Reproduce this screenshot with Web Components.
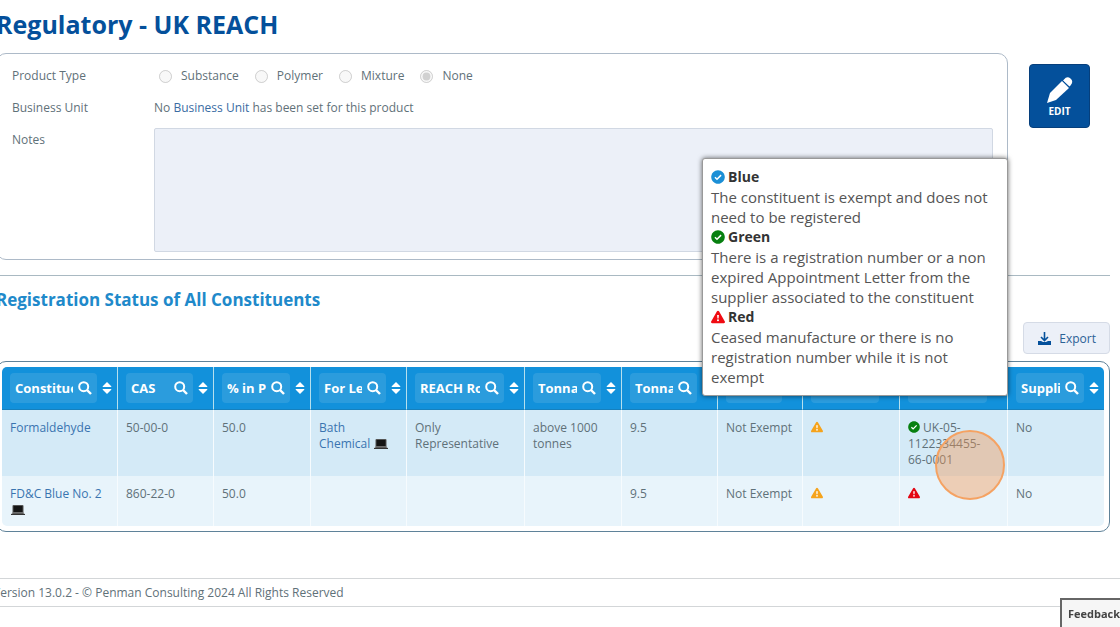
<!DOCTYPE html>
<html lang="en">
<head>
<meta charset="utf-8">
<title>Regulatory - UK REACH</title>
<style>
    body {
        margin: 0;
        overflow-x: hidden;
        background: #fff;
        color: #5f7179;
        font: 12px/16px "Open Sans", "Noto Sans", sans-serif;
    }
</style>
</head>
<body>
<reach-page>
    <product-panel></product-panel>
    <edit-button slot="action"></edit-button>
    <export-button slot="tools"></export-button>
    <constituent-table slot="table"></constituent-table>
</reach-page>
<page-footer>Version 13.0.2 - © Penman Consulting 2024 All Rights Reserved</page-footer>
<status-tooltip></status-tooltip>
<click-marker></click-marker>
<feedback-tab>Feedback</feedback-tab>

<script>
const icons = {
    check: `<svg viewBox="0 0 512 512"><path fill="currentColor" d="M504 256c0 137-111 248-248 248S8 393 8 256 119 8 256 8s248 111 248 248z"/><path fill="none" stroke="#fff" stroke-width="54" d="M145 264l74 74 150-150"/></svg>`,
    warning: `<svg viewBox="0 0 576 512"><path fill="currentColor" d="M569.500 440c18.500 32-4.700 72-41.600 72H48c-36.900 0-60-40-41.600-72L246.400 24c18.500-32 64.700-32 83.200 0z"/><path fill="#fff" d="M251 172h74l-12 148h-50zM288 348a42 42 0 1 1 0 84 42 42 0 0 1 0-84z"/></svg>`,
    laptop: `<svg viewBox="0 0 28 22"><path fill="#555" d="M5 1h18a2 2 0 0 1 2 2v14H3V3a2 2 0 0 1 2-2z"/><path fill="#151515" d="M5 3h18v12H5z"/><path fill="#858585" d="M3 16h22l3 4H0z"/><path fill="#333" d="M4 17h20l1 1H3zM0 19h28v2H0z"/></svg>`
};

class ReachPage extends HTMLElement {
    constructor() {
        super();
        this.attachShadow({ mode: 'open' });
    }

    connectedCallback() {
        this.shadowRoot.innerHTML = `
            <style>
                :host {
                    display: block;
                    margin: 0 10px 0 -4px;
                }
                h1 {
                    margin: 0;
                    padding: 4px 0 9px;
                    color: #04509b;
                    font-size: 25px;
                    line-height: 40px;
                    font-weight: 700;
                }
                h2 {
                    margin: 0;
                    color: #2089ca;
                    font-size: 17px;
                    line-height: 24px;
                    font-weight: 700;
                }
                .top {
                    display: flex;
                    align-items: flex-start;
                    gap: 21px;
                    padding: 0 20px 15px 0;
                    border-bottom: 1px solid #a9b9c2;
                }
                .top ::slotted(product-panel) {
                    flex: 1;
                }
                .list {
                    padding-top: 12px;
                }
                .tools {
                    display: flex;
                    justify-content: flex-end;
                    padding: 10px 0 7px;
                }
            </style>
            <h1>Regulatory - UK REACH</h1>
            <div class="top"><slot></slot><slot name="action"></slot></div>
            <section class="list">
                <h2>Registration Status of All Constituents</h2>
                <div class="tools"><slot name="tools"></slot></div>
                <slot name="table"></slot>
            </section>
        `;
    }
}

class ProductPanel extends HTMLElement {
    constructor() {
        super();
        this.attachShadow({ mode: 'open' });
    }

    connectedCallback() {
        const types = ['Substance', 'Polymer', 'Mixture', 'None'];
        this.shadowRoot.innerHTML = `
            <style>
                :host {
                    display: block;
                    padding: 10px 14px 7px 15px;
                    border: 1px solid #adbac8;
                    border-radius: 10px;
                    line-height: 24px;
                }
                .form {
                    display: grid;
                    grid-template-columns: 142px 1fr;
                    row-gap: 8px;
                }
                .radios {
                    display: flex;
                    gap: 16px;
                    padding-left: 5px;
                }
                .radios label {
                    display: flex;
                    align-items: center;
                    gap: 9px;
                }
                input {
                    width: 13px;
                    height: 13px;
                    margin: 0;
                }
                a {
                    color: #3a6ca3;
                    text-decoration: none;
                }
                textarea {
                    display: block;
                    box-sizing: border-box;
                    width: 100%;
                    height: 124px;
                    border: 1px solid #d1d8e3;
                    border-radius: 2px;
                    background: #ecf0f8;
                    resize: none;
                }
            </style>
            <div class="form">
                <span id="type">Product Type</span>
                <div class="radios" role="radiogroup" aria-labelledby="type">
                    ${types.map(t => `<label><input type="radio" name="type" disabled ${t === 'None' ? 'checked' : ''}>${t}</label>`).join('')}
                </div>
                <span>Business Unit</span>
                <span>No <a href="#">Business Unit</a> has been set for this product</span>
                <label for="notes">Notes</label>
                <textarea id="notes" readonly></textarea>
            </div>
        `;
    }
}

class EditButton extends HTMLElement {
    constructor() {
        super();
        this.attachShadow({ mode: 'open' });
    }

    connectedCallback() {
        this.shadowRoot.innerHTML = `
            <style>
                :host {
                    display: block;
                    margin-top: 11px;
                }
                button {
                    display: flex;
                    flex-direction: column;
                    align-items: center;
                    justify-content: center;
                    width: 61px;
                    height: 64px;
                    padding: 3px 0 0;
                    border: 1px solid #063f7c;
                    border-radius: 4px;
                    background: #04509b;
                    color: #fff;
                    font: 700 10px/16px "Open Sans", sans-serif;
                }
                svg {
                    width: 26px;
                    height: 26px;
                }
            </style>
            <button type="button">
                <svg viewBox="0 0 26 26" fill="#fff"><path d="M15 4l7 7L9 23 0 26l3-10z"/><path d="M17 2.500q3-4 6.500-1t0 7l-1 1L16 3.500z"/><path d="M15.500 3.500l7 7" stroke="#04509b" stroke-width="1"/></svg>
                EDIT
            </button>
        `;
    }
}

class ExportButton extends HTMLElement {
    constructor() {
        super();
        this.attachShadow({ mode: 'open' });
    }

    connectedCallback() {
        this.shadowRoot.innerHTML = `
            <style>
                :host {
                    display: block;
                }
                button {
                    display: flex;
                    align-items: center;
                    gap: 8px;
                    height: 32px;
                    padding: 1px 13px 0 14px;
                    border: 1px solid #d5dbe6;
                    border-radius: 4px;
                    background: #ecf0f8;
                    color: #2b6195;
                    font: 12px/16px "Open Sans", sans-serif;
                }
                svg {
                    width: 13px;
                    height: 13px;
                }
            </style>
            <button type="button">
                <svg viewBox="0 0 13 13"><path fill="#04509b" d="M0 9h3l2 1h3l2-1h3v4H0z"/><path fill="none" stroke="#04509b" stroke-width="1.600" d="M6.500 0v8M3 5l3.500 3.500L10 5"/></svg>
                Export
            </button>
        `;
    }
}

class StatusIcon extends HTMLElement {
    constructor() {
        super();
        this.attachShadow({ mode: 'open' });
    }

    connectedCallback() {
        this.shadowRoot.innerHTML = `
            <style>
                :host {
                    display: inline-block;
                    width: 12px;
                    height: 12px;
                    vertical-align: -1px;
                }
                :host([size="large"]) {
                    width: 14px;
                    height: 14px;
                    vertical-align: -2px;
                }
                :host([type="laptop"]) {
                    width: 14px;
                    margin-left: 1px;
                    vertical-align: -2px;
                }
                svg {
                    display: block;
                    width: 100%;
                    height: 100%;
                }
            </style>
            ${icons[this.getAttribute('type')]}
        `;
    }
}

class ColumnFilter extends HTMLElement {
    constructor() {
        super();
        this.attachShadow({ mode: 'open' });
    }

    connectedCallback() {
        const name = this.getAttribute('name');
        this.shadowRoot.innerHTML = `
            <style>
                :host {
                    display: flex;
                    align-items: center;
                    gap: 5px;
                }
                .box {
                    display: flex;
                    flex: 1;
                    align-items: center;
                    gap: 5px;
                    min-width: 0;
                    height: 30px;
                    box-sizing: border-box;
                    padding: 0 5px;
                    border-radius: 4px;
                    background: #2b9cdd;
                }
                input {
                    flex: 1;
                    width: 0;
                    min-width: 0;
                    padding: 0;
                    border: 0;
                    background: none;
                    font: 700 13px/20px "Open Sans", sans-serif;
                    color: #fff;
                }
                input::placeholder {
                    color: #fff;
                    opacity: 1;
                }
                .search {
                    width: 14px;
                    height: 14px;
                    flex: none;
                }
                button {
                    display: flex;
                    padding: 0;
                    border: 0;
                    background: none;
                }
                .sort {
                    width: 10px;
                    height: 12px;
                }
            </style>
            <div class="box">
                <input type="text" placeholder="${name}" aria-label="${name}">
                <svg class="search" viewBox="0 0 14 14" fill="none" stroke="#fff" stroke-width="2"><circle cx="5.700" cy="5.700" r="4.500"/><path stroke-width="2.400" d="M9 9l4 4"/></svg>
            </div>
            <button type="button" aria-label="Sort">
                <svg class="sort" viewBox="0 0 10 12" fill="#fff"><path d="M5 0l4 4q1 1 0 1H1q-1 0 0-1zM5 12l4-4q1-1 0-1H1q-1 0 0 1z"/></svg>
            </button>
        `;
    }
}

class ConstituentTable extends HTMLElement {
    constructor() {
        super();
        this.attachShadow({ mode: 'open' });
    }

    connectedCallback() {
        const columns = [
            ['Constituent', 116], ['CAS', 96], ['% in Product', 97], ['For Legal Entity', 96],
            ['REACH Role', 118], ['Tonnage Band', 97], ['Tonnage', 96], ['Status', 85],
            ['Alerts', 97], ['Registration', 108], ['Supplier', 96]
        ];
        const rows = [
            ['<a href="#">Formaldehyde</a>', '50-00-0', '50.0',
                '<a href="#">Bath Chemical</a> <status-icon type="laptop"></status-icon>',
                'Only Representative', 'above 1000 tonnes', '9.5', 'Not Exempt',
                '<status-icon class="amber" type="warning"></status-icon>',
                '<status-icon class="green" type="check"></status-icon> UK-05-<br>1122334455-<br>66-0001', 'No'],
            ['<a href="#">FD&amp;C Blue No. 2</a> <status-icon type="laptop"></status-icon>', '860-22-0', '50.0',
                '', '', '', '9.5', 'Not Exempt',
                '<status-icon class="amber" type="warning"></status-icon>',
                '<status-icon class="red" type="warning"></status-icon>', 'No']
        ];
        this.shadowRoot.innerHTML = `
            <style>
                :host {
                    display: block;
                    padding: 5px;
                    border: 1px solid #5f8299;
                    border-radius: 10px;
                }
                table {
                    width: 100%;
                    table-layout: fixed;
                    border-collapse: separate;
                    border-spacing: 0;
                    border-radius: 5px;
                    overflow: hidden;
                }
                th {
                    height: 43px;
                    box-sizing: border-box;
                    padding: 0 5px 0 8px;
                    background: #1291db;
                    border-right: 1px solid #b5e0ee;
                    border-bottom: 1px solid #1680bd;
                }
                td {
                    padding: 10px 8px 8px;
                    vertical-align: top;
                    background: #d4eaf7;
                    border-right: 1px solid #f6fbfe;
                }
                tr:nth-child(2) td {
                    background: #e8f4fb;
                }
                th:last-child, td:last-child {
                    border-right: 0;
                }
                a {
                    color: #3a74b0;
                    text-decoration: none;
                }
                .amber { color: #f5a31c; }
                .green { color: #078010; }
                .red { color: #e30613; }
            </style>
            <table>
                <colgroup>${columns.map(c => `<col style="width: ${c[1]}px">`).join('')}</colgroup>
                <thead>
                    <tr>${columns.map(c => `<th><column-filter name="${c[0]}"></column-filter></th>`).join('')}</tr>
                </thead>
                <tbody>
                    ${rows.map(r => `<tr>${r.map(c => `<td>${c}</td>`).join('')}</tr>`).join('')}
                </tbody>
            </table>
        `;
    }
}

class StatusTooltip extends HTMLElement {
    constructor() {
        super();
        this.attachShadow({ mode: 'open' });
    }

    connectedCallback() {
        this.shadowRoot.innerHTML = `
            <style>
                :host {
                    position: absolute;
                    top: 158px;
                    right: 112px;
                    width: 306px;
                    box-sizing: border-box;
                    padding: 8px;
                    border: 1px solid #999;
                    border-radius: 3px;
                    background: #fff;
                    box-shadow: 0 0 5px rgba(0, 0, 0, .6);
                    color: #555;
                    font-size: 15px;
                    line-height: 20px;
                }
                dl, dd {
                    margin: 0;
                }
                dt {
                    display: flex;
                    align-items: center;
                    gap: 3px;
                    color: #333;
                    font-size: 14px;
                    font-weight: 700;
                }
                .blue { color: #1b8fd6; }
                .green { color: #078010; }
                .red { color: #f00b12; }
            </style>
            <dl role="tooltip">
                <dt><status-icon class="blue" size="large" type="check"></status-icon>Blue</dt>
                <dd>The constituent is exempt and does not need to be registered</dd>
                <dt><status-icon class="green" size="large" type="check"></status-icon>Green</dt>
                <dd>There is a registration number or a non expired Appointment Letter from the supplier associated to the constituent</dd>
                <dt><status-icon class="red" size="large" type="warning"></status-icon>Red</dt>
                <dd>Ceased manufacture or there is no registration number while it is not exempt</dd>
            </dl>
        `;
    }
}

class ClickMarker extends HTMLElement {
    constructor() {
        super();
        this.attachShadow({ mode: 'open' });
    }

    connectedCallback() {
        this.shadowRoot.innerHTML = `
            <style>
                :host {
                    position: absolute;
                    top: 430px;
                    right: 115px;
                    width: 70px;
                    height: 70px;
                    box-sizing: border-box;
                    border: 2px solid #f5a262;
                    border-radius: 50%;
                    background: rgba(245, 150, 80, .4);
                    pointer-events: none;
                }
            </style>
        `;
    }
}

class PageFooter extends HTMLElement {
    constructor() {
        super();
        this.attachShadow({ mode: 'open' });
    }

    connectedCallback() {
        this.shadowRoot.innerHTML = `
            <style>
                :host {
                    display: block;
                    margin: 46px 0 20px -7px;
                    padding: 6px 0 5px;
                    border: 1px solid #d3d6d8;
                    border-width: 1px 0;
                }
            </style>
            <footer><slot></slot></footer>
        `;
    }
}

class FeedbackTab extends HTMLElement {
    constructor() {
        super();
        this.attachShadow({ mode: 'open' });
    }

    connectedCallback() {
        this.shadowRoot.innerHTML = `
            <style>
                :host {
                    position: fixed;
                    right: 0;
                    bottom: 0;
                }
                button {
                    display: block;
                    height: 29px;
                    padding: 0 0 0 6px;
                    border: 2px solid #666;
                    border-width: 2px 0 0 2px;
                    background: #f6f6f6;
                    color: #444;
                    font: 700 11px/16px "Open Sans", sans-serif;
                }
            </style>
            <button type="button"><slot></slot></button>
        `;
    }
}

customElements.define('status-icon', StatusIcon);
customElements.define('column-filter', ColumnFilter);
customElements.define('reach-page', ReachPage);
customElements.define('product-panel', ProductPanel);
customElements.define('edit-button', EditButton);
customElements.define('export-button', ExportButton);
customElements.define('constituent-table', ConstituentTable);
customElements.define('page-footer', PageFooter);
customElements.define('status-tooltip', StatusTooltip);
customElements.define('click-marker', ClickMarker);
customElements.define('feedback-tab', FeedbackTab);
</script>
</body>
</html>
